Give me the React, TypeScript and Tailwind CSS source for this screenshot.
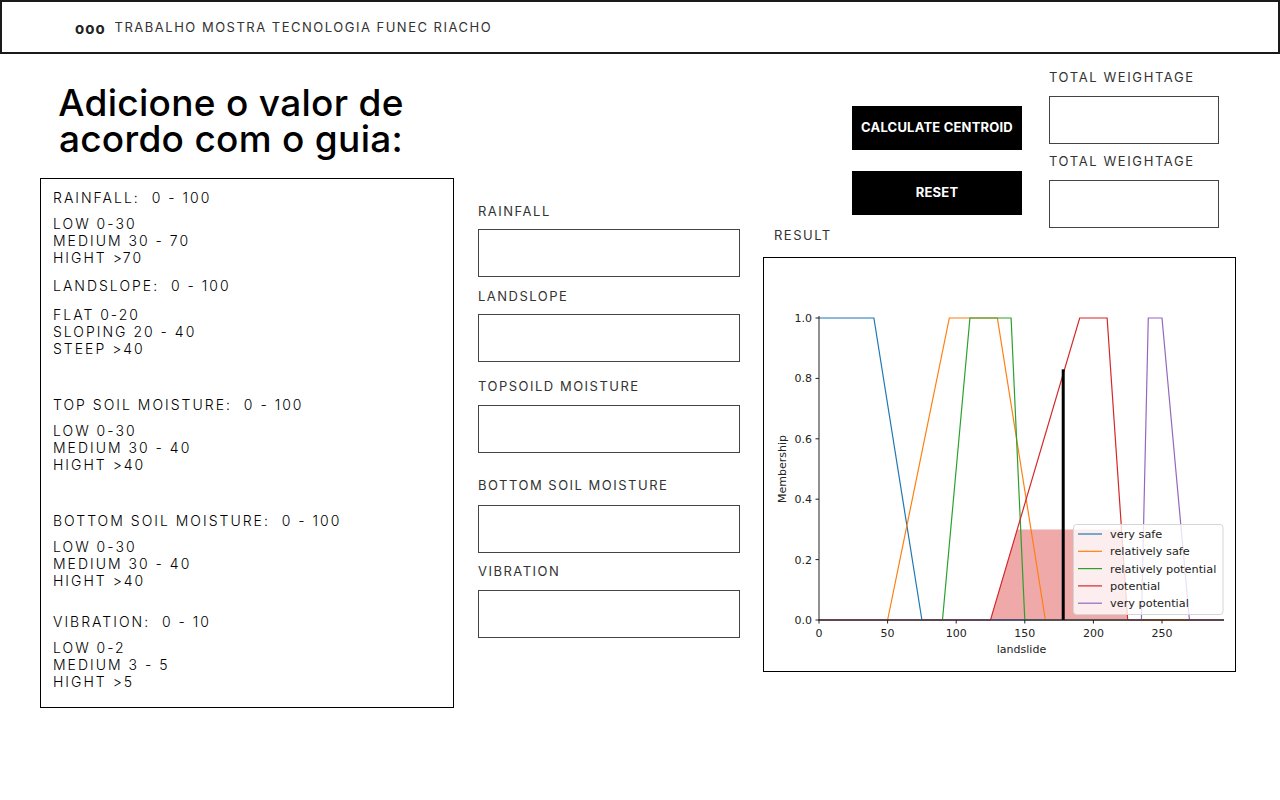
import React from "react";

const FONT = { fontFamily: "Inter, 'Noto Sans', sans-serif" };
const MPL = "'DejaVu Sans', sans-serif";

const guide = [
  { title: "RAINFALL:  0 - 100", items: ["LOW 0-30", "MEDIUM 30 - 70", "HIGHT >70"], mt: "mt-0", gap: "mt-[9px]" },
  { title: "LANDSLOPE:  0 - 100", items: ["FLAT 0-20", "SLOPING 20 - 40", "STEEP >40"], mt: "mt-[11px]", gap: "mt-[12px]" },
  { title: "TOP SOIL MOISTURE:  0 - 100", items: ["LOW 0-30", "MEDIUM 30 - 40", "HIGHT >40"], mt: "mt-[39px]", gap: "mt-[9px]" },
  { title: "BOTTOM SOIL MOISTURE:  0 - 100", items: ["LOW 0-30", "MEDIUM 30 - 40", "HIGHT >40"], mt: "mt-[39px]", gap: "mt-[9px]" },
  { title: "VIBRATION:  0 - 10", items: ["LOW 0-2", "MEDIUM 3 - 5", "HIGHT >5"], mt: "mt-[24px]", gap: "mt-[9px]" },
];

const fields = [
  { label: "RAINFALL", mt: "mt-[148px]", gap: "mt-[9px]" },
  { label: "LANDSLOPE", mt: "mt-[10px]", gap: "mt-[9px]" },
  { label: "TOPSOILD MOISTURE", mt: "mt-[15px]", gap: "mt-[10px]" },
  { label: "BOTTOM SOIL MOISTURE", mt: "mt-[23px]", gap: "mt-[11px]" },
  { label: "VIBRATION", mt: "mt-[9px]", gap: "mt-[10px]" },
];

// matplotlib-ish axes mapping
const X = (v: number) => 819 + v * 1.372;
const Y = (m: number) => 620 - m * 302;
const pts = (arr: [number, number][]) => arr.map(([v, m]) => `${X(v)},${Y(m)}`).join(" ");

const series = [
  { name: "very safe", color: "#1f77b4", p: [[0, 1], [40, 1], [75, 0], [295, 0]] as [number, number][] },
  { name: "relatively safe", color: "#ff7f0e", p: [[0, 0], [50, 0], [95, 1], [130, 1], [165, 0], [295, 0]] as [number, number][] },
  { name: "relatively potential", color: "#2ca02c", p: [[0, 0], [90, 0], [110, 1], [140, 1], [150, 0], [295, 0]] as [number, number][] },
  { name: "potential", color: "#d62728", p: [[0, 0], [125, 0], [190, 1], [210, 1], [225, 0], [295, 0]] as [number, number][] },
  { name: "very potential", color: "#9467bd", p: [[0, 0], [235, 0], [240, 1], [250, 1], [270, 0], [295, 0]] as [number, number][] },
];

function Chart() {
  const yt = [0, 0.2, 0.4, 0.6, 0.8, 1.0];
  const xt = [0, 50, 100, 150, 200, 250];
  return (
    <svg width={471} height={413} viewBox="764 258 471 413" style={{ fontFamily: MPL }}>
      <polygon points={pts([[125, 0], [144.5, 0.3], [220.5, 0.3], [225, 0]])} fill="#d62728" fillOpacity={0.4} />
      {series.map((s) => (
        <polyline key={s.name} points={pts(s.p)} fill="none" stroke={s.color} strokeWidth={1.2} />
      ))}
      <line x1={X(178)} y1={Y(0)} x2={X(178)} y2={Y(0.83)} stroke="#000" strokeWidth={3} />
      {/* spines */}
      <line x1={819} y1={316} x2={819} y2={620.5} stroke="#222" strokeWidth={1} />
      <line x1={818.5} y1={620} x2={1224} y2={620} stroke="#222" strokeWidth={1.2} />
      {yt.map((t) => (
        <g key={t}>
          <line x1={815.5} x2={819} y1={Y(t)} y2={Y(t)} stroke="#222" />
          <text x={812} y={Y(t) + 4} fontSize={11} textAnchor="end" fill="#222">
            {t.toFixed(1)}
          </text>
        </g>
      ))}
      {xt.map((t) => (
        <g key={t}>
          <line x1={X(t)} x2={X(t)} y1={620} y2={623.5} stroke="#222" />
          <text x={X(t)} y={637} fontSize={11} textAnchor="middle" fill="#222">
            {t}
          </text>
        </g>
      ))}
      <text x={1021.5} y={653} fontSize={11} textAnchor="middle" fill="#222">landslide</text>
      <text x={786} y={469} fontSize={11} textAnchor="middle" fill="#222" transform="rotate(-90 786 469)">
        Membership
      </text>
      {/* legend */}
      <rect x={1073.5} y={524.5} width={149.5} height={90} rx={3} fill="#fff" fillOpacity={0.8} stroke="#d6d6d6" />
      {series.map((s, i) => {
        const y = 534 + i * 17.3;
        return (
          <g key={s.name}>
            <line x1={1078} x2={1102} y1={y} y2={y} stroke={s.color} strokeWidth={1.2} />
            <text x={1110} y={y + 4} fontSize={11.3} fill="#222">
              {s.name}
            </text>
          </g>
        );
      })}
    </svg>
  );
}

export default function App() {
  return (
    <div className="w-[1280px] h-[800px] bg-white text-black overflow-hidden" style={FONT}>
      <header className="h-[54px] border-2 border-[#1a1a1a] flex items-center pl-[73px]">
        <span className="text-[15px] font-bold tracking-[1px] text-[#222] leading-none mt-[2px]">ooo</span>
        <span className="ml-[9px] text-[13px] tracking-[1.5px] text-[#333] leading-none">
          TRABALHO MOSTRA TECNOLOGIA FUNEC RIACHO
        </span>
      </header>

      <main className="flex">
        {/* guide */}
        <section className="ml-[40px] w-[414px] flex flex-col">
          <h1 className="mt-[31px] w-[382px] text-center text-[37px] leading-[36px] tracking-[0.3px] font-medium text-black">
            Adicione o valor de
            <br />
            acordo com o guia:
          </h1>
          <div className="mt-[21px] h-[530px] border border-black pl-[12px] pt-[10px]">
            {guide.map((g) => (
              <div key={g.title} className={g.mt}>
                <div className="whitespace-pre text-[14px] leading-[17px] tracking-[2px] font-light">{g.title}</div>
                <div className={`${g.gap} text-[14px] leading-[17px] tracking-[2px] font-light`}>
                  {g.items.map((it) => (
                    <div key={it}>{it}</div>
                  ))}
                </div>
              </div>
            ))}
          </div>
        </section>

        {/* inputs */}
        <section className="ml-[24px] w-[262px] flex flex-col">
          {fields.map((f) => (
            <div key={f.label} className={`${f.mt} flex flex-col`}>
              <label className="text-[13px] leading-[18px] tracking-[1.5px] text-[#333]">{f.label}</label>
              <input className={`${f.gap} h-[48px] w-[262px] border border-[#444] outline-none`} />
            </div>
          ))}
        </section>

        {/* result */}
        <section className="ml-[23px] w-[473px] flex flex-col">
          <div className="flex items-start">
            <div className="w-[286px] flex flex-col">
              <button className="ml-[89px] mt-[52px] w-[170px] h-[44px] bg-black text-white text-[13px] font-bold tracking-[0.2px]">
                CALCULATE CENTROID
              </button>
              <button className="ml-[89px] mt-[21px] w-[170px] h-[44px] bg-black text-white text-[13px] font-bold tracking-[0.2px]">
                RESET
              </button>
              <div className="ml-[11px] mt-[11px] text-[13px] leading-[18px] tracking-[1.5px] text-[#333]">RESULT</div>
            </div>
            <div className="flex flex-col mt-[14px]">
              <div className="text-[13px] leading-[18px] tracking-[1.6px] text-[#333]">TOTAL WEIGHTAGE</div>
              <input className="mt-[10px] w-[170px] h-[48px] border border-[#444] outline-none" />
              <div className="mt-[8px] text-[13px] leading-[18px] tracking-[1.6px] text-[#333]">TOTAL WEIGHTAGE</div>
              <input className="mt-[10px] w-[170px] h-[48px] border border-[#444] outline-none" />
            </div>
          </div>
          <div className="mt-[13px] w-[473px] h-[415px] border border-black">
            <Chart />
          </div>
        </section>
      </main>
    </div>
  );
}
